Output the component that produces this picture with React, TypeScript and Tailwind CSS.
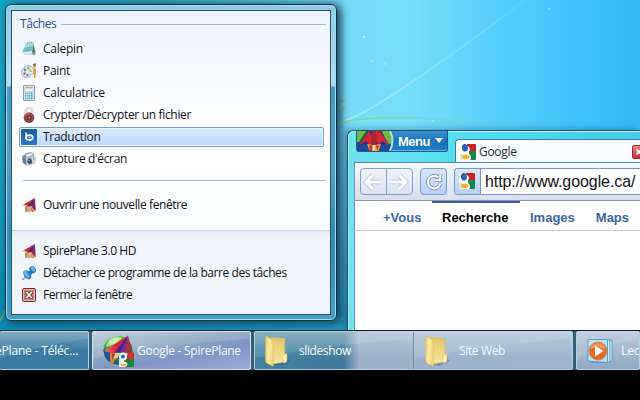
import React from "react";

const UI = "font-['Open_Sans','Noto_Sans',sans-serif]";

function Notepad() {
  return (
    <svg viewBox="0 0 16 16" className="h-4 w-4">
      <path d="M1 13.500l10 .5 4-1-3-1z" fill="#8a9b9c" opacity=".4" />
      <path d="M12 1.500l2.600 9.500-.8 3-3-1z" fill="#4c7f84" />
      <path d="M5.500 2l7-1-2 9.500-9.500 1z" fill="#6fbdc0" />
      <path d="M5.500 2l7-1-.8 4-8.200 2z" fill="#a8dfdd" />
      <path d="M1 11.500l9.500-1 1.500 2-8.500.8z" fill="#d5ece9" />
      <path d="M6.500 1v2M8.500 .8v2M10.500 .6v2" stroke="#8aa9ab" strokeWidth=".7" />
      <path d="M12 11.500l2.500.5-.7 2.500z" fill="#c88a70" />
    </svg>
  );
}

function Palette() {
  return (
    <svg viewBox="0 0 16 16" className="h-4 w-4">
      <path d="M7 2.800C2.500 3 .3 7 .7 10.500c.4 3.200 3.800 4.500 7.300 3.600 2.300-.7.8-2.800 2.800-3.300 3-.7 3.200-3.300 1.400-5.600C11 3.500 9 2.700 7 2.800z" fill="#e4eef6" stroke="#8aa6c4" strokeWidth=".9" />
      <circle cx="4" cy="7" r="1.400" fill="#4a8cd5" />
      <circle cx="7.300" cy="5.300" r="1.300" fill="#6cc04e" />
      <circle cx="9.500" cy="7.800" r="1.400" fill="#e0b036" />
      <circle cx="3.500" cy="10.600" r="1.300" fill="#d55a4a" />
      <circle cx="6.500" cy="12" r="1.200" fill="#4b91d6" />
      <path d="M12.400 5.500h2.400l.2 4.500-.8 5h-1l-1-5z" fill="#e8973f" />
      <path d="M12.500 3.500h2.200v2h-2.200z" fill="#c9c2b2" />
      <path d="M11.800 1.200l1.500-.7L15 0l-.2 3.500h-2.600z" fill="#a9744a" />
    </svg>
  );
}

function Calculator() {
  return (
    <svg viewBox="0 0 16 16" className="h-4 w-4">
      <rect x="2.500" y=".5" width="11" height="15" rx=".5" fill="#dceaf3" stroke="#7fa4bc" />
      <path d="M4 2h8v1H4z" fill="#eba55c" />
      <rect x="4" y="3.500" width="8" height="2.500" fill="#fbfdff" stroke="#a9c4d5" strokeWidth=".5" />
      {[7.5, 10, 12.5].map((y) =>
        [4, 6, 8, 10].map((x) => <rect key={x + "-" + y} x={x} y={y} width="1.500" height="1.600" fill={x > 8 ? "#3f93bb" : "#68b2d0"} />),
      )}
    </svg>
  );
}

function Padlock() {
  return (
    <svg viewBox="0 0 16 16" className="h-4 w-4">
      <path d="M4.700 8V4a3.300 3.300 0 0 1 6.600 0v4" fill="none" stroke="#c4b9b8" strokeWidth="2.200" />
      <path d="M4.700 7V4a3.300 3.300 0 0 1 6.600 0v3" fill="none" stroke="#f4eeec" strokeWidth="1.100" />
      <circle cx="8" cy="10.700" r="4.900" fill="#b03a3b" stroke="#7d2a2d" strokeWidth=".8" />
      <circle cx="8.300" cy="10.700" r="3" fill="#5f3840" stroke="#8c4c4e" strokeWidth=".7" />
      <circle cx="8.300" cy="10.700" r="1" fill="#b39b9c" />
      <path d="M4.500 8.500q1.500-2 4-1.700" stroke="#e09a92" strokeWidth=".8" fill="none" />
    </svg>
  );
}

function Translator() {
  return (
    <svg viewBox="0 0 16 16" className="h-4 w-4">
      <defs>
        <linearGradient id="translate" x2="0" y2="1"><stop stopColor="#1c5c9e" /><stop offset="1" stopColor="#3478bd" /></linearGradient>
      </defs>
      <rect width="16" height="16" rx="1" fill="url(#translate)" />
      <path d="M4 3.900l1.200.5v4" stroke="white" strokeWidth="1.300" fill="none" />
      <ellipse cx="8.300" cy="8.600" rx="3.500" ry="2.500" fill="none" stroke="white" strokeWidth="1.600" />
      <ellipse cx="8.300" cy="8.300" rx="1" ry=".6" fill="white" />
    </svg>
  );
}

function Camera() {
  return (
    <svg viewBox="0 0 16 16" className="h-4 w-4">
      <path d="M4 2.500l6-1.500 3.500 2.500-1 3-9 2z" fill="#929aa1" />
      <path d="M4.500 4l6-2 1.500 2-6 2z" fill="#eef5f8" />
      <path d="M1 6.500l11-2 3 2-1 6-8 2.500-4-3z" fill="#adb8c1" />
      <path d="M1 6.500l4 1.500v6l-3-2.500z" fill="#697782" />
      <path d="M5 8l9-2-.5 6-7.500 2.200z" fill="#d2dde4" />
      <ellipse cx="8.700" cy="10.300" rx="2.500" ry="3" fill="#536b7d" />
      <ellipse cx="8.700" cy="10.300" rx="1.500" ry="2" fill="#1e3f5c" />
      <path d="M1.500 4.500l3.500-1v4H1.500z" fill="#7399b9" />
      <circle cx="8.300" cy="9.500" r=".7" fill="#b4d8ef" />
      <path d="M12 7l1.500-.3v2L12 9z" fill="#8ea4b4" />
    </svg>
  );
}

function Plane() {
  return (
    <svg viewBox="0 0 16 16" className="h-4 w-4">
      <path d="M4 9l9 0 .5 6-3-2-1.500 2.300-5-.8z" fill="#d9a48a" />
      <path d="M.5 8.500L7 4.800 6 9.500z" fill="#ecc08e" />
      <path d="M3 7.200L14 .8 8 9.500z" fill="#cf2a2c" />
      <path d="M7 8.500l7-7.700-2.500 9z" fill="#3d2a9c" />
      <path d="M11 9L14 .8l.7 13.700-3.200-3.500z" fill="#92245c" />
      <path d="M6 9.500l5-.5-1 4.500-3.500-1z" fill="#e3ab92" />
      <path d="M4.500 10l2 .5-.5 4-1.700.2z" fill="#a8875a" />
      <path d="M10.500 10.500l3 4.500h-2.500l-1.500-2z" fill="#dc8636" />
      <path d="M6 9.200l5.500-.7" stroke="#7b2430" strokeWidth=".8" />
    </svg>
  );
}

function Pin() {
  return (
    <svg viewBox="0 0 16 16" className="h-4 w-4">
      <path d="M5 11l-3.500 4" stroke="#8a99a5" strokeWidth="1.200" />
      <ellipse cx="6.300" cy="9.700" rx="3.300" ry="5" transform="rotate(-38 6.300 9.700)" fill="#2a74bb" />
      <ellipse cx="5.500" cy="9.300" rx="2" ry="4.200" transform="rotate(-38 5.500 9.300)" fill="#62b5e8" />
      <path d="M6 8l4-4 3 3-4 4z" fill="#347fb9" />
      <ellipse cx="11.700" cy="4.600" rx="2.900" ry="3.700" transform="rotate(-38 11.700 4.600)" fill="#2b6fb8" />
      <ellipse cx="12.100" cy="4.200" rx="1.900" ry="2.700" transform="rotate(-38 12.100 4.200)" fill="#69b1ee" />
    </svg>
  );
}

function Cross() {
  return (
    <svg viewBox="0 0 16 16" className="h-4 w-4">
      <rect x="1.500" y="1.500" width="13" height="13" rx="1.500" fill="#cb8177" stroke="#742c2c" />
      <rect x="2.500" y="2.500" width="11" height="11" rx=".5" fill="none" stroke="#ecb5ae" />
      <path d="M5.500 5.200l5 5.600m0-5.600l-5 5.600" stroke="#59292a" strokeWidth="3.300" />
      <path d="M4 5.200h3m2 0h3M4 10.800h3m2 0h3" stroke="#59292a" strokeWidth="2.200" />
      <path d="M5.500 5.200l5 5.600m0-5.600l-5 5.600" stroke="white" strokeWidth="1.700" />
      <path d="M4.500 5.200h2.200m2.600 0h2.200M4.500 10.800h2.200m2.600 0h2.200" stroke="white" />
    </svg>
  );
}

function GoogleIcon() {
  return (
    <svg viewBox="0 0 16 16" className="h-4 w-4 shrink-0">
      <path d="M0 0h16v16H0z" fill="#fff" />
      <path d="M7 0h8q1 0 1 1v6h-6.500C10.500 4 9.500 2.500 7 2z" fill="#cf1f2a" />
      <path d="M9 7h7v8q0 1-1 1h-5c2-2 1.500-4-1-6z" fill="#16864b" />
      <path d="M0 10h3l-1.500 2L2 16H1q-1 0-1-1z" fill="#cfe0ea" />
      <ellipse cx="4.900" cy="3.800" rx="2.900" ry="3.800" transform="rotate(-12 4.900 3.800)" fill="#2962b2" />
      <ellipse cx="5.500" cy="13" rx="3.800" ry="2.500" fill="#f0b335" />
    </svg>
  );
}

function Orb() {
  return (
    <svg viewBox="0 0 32 32" className="h-8 w-8 shrink-0">
      <defs>
        <radialGradient id="globe" cx=".4" cy=".15" r=".9"><stop stopColor="#c9f0ae" /><stop offset=".3" stopColor="#58b83e" /><stop offset=".65" stopColor="#20753f" /><stop offset="1" stopColor="#20539b" /></radialGradient>
        <linearGradient id="wing" x2="1"><stop stopColor="#f0776a" /><stop offset=".5" stopColor="#e02036" /><stop offset="1" stopColor="#d81d33" /></linearGradient>
      </defs>
      <circle cx="16" cy="15.500" r="15" fill="url(#globe)" stroke="#adcdd2" strokeWidth=".8" />
      <path d="M1.500 14q5 1 7 5l0 9q-7-5-7-14z" fill="#234f9e" />
      <path d="M7 6q5-5 13-3l-8 6-8 3q1-4 3-6z" fill="#e2f8d6" opacity=".65" />
      <path d="M2 16L26 .500 14 18l-5 0z" fill="url(#wing)" />
      <path d="M13 17.500L26 .500l-5 17z" fill="#3426a0" />
      <path d="M18 17L26 .500l-2 17z" fill="#7a2798" />
      <path d="M23 17L26 .500l4.500 17-3.500-2z" fill="#b0303b" />
      <path d="M8 18l7 0-2 7-3 5-2-2z" fill="#d9813a" />
      <path d="M13 18l5 0-3 6-3-1z" fill="#efc09d" />
      <path d="M10 18.500l3 .5-3 6z" fill="#8b4633" />
      <path d="M24 17.500h8v7h-8z" fill="#d42f27" />
      <path d="M23 24h9v8h-9z" fill="#17863f" />
      <path d="M17 24h5v8h-5z" fill="#dfeff3" />
      <circle cx="21" cy="21.500" r="3" fill="#2465b7" stroke="white" strokeWidth="2" />
      <path d="M23 19.200h2.500M20.500 25q-1.500 1.500 1.500 2.200t2.500 2" fill="none" stroke="white" strokeWidth="1.600" />
      <ellipse cx="21.500" cy="29.800" rx="3.400" ry="1.700" fill="#efa82c" stroke="white" strokeWidth="1" />
    </svg>
  );
}

function Folder() {
  return (
    <svg viewBox="0 0 28 32" className="h-8 w-7 shrink-0">
      <defs>
        <linearGradient id="folderFront" x2="1" y2=".2"><stop stopColor="#e3c868" /><stop offset=".5" stopColor="#fbeaa0" /><stop offset="1" stopColor="#efd77f" /></linearGradient>
        <linearGradient id="folderBack" x2="0" y2="1"><stop stopColor="#e2c566" /><stop offset="1" stopColor="#f8e7a0" /></linearGradient>
      </defs>
      <path d="M9 30l14-8 4 4-11 5z" fill="#26516d" opacity=".3" />
      <path d="M8 2.500l13 .8q.8 0 .8 1V27l-12 2z" fill="url(#folderBack)" stroke="#d2b458" strokeWidth=".5" />
      <path d="M20 19.500l4-1v7.500q0 1.500-4 2z" fill="#fbeaaa" stroke="#d2b458" strokeWidth=".5" />
      <path d="M2.500 2q0-1 1.500-.6l5.500 3.600q.8.600.8 1.500v24q0 .8-.8.500L3.500 28q-1-.7-1-1.700z" fill="url(#folderFront)" stroke="#d2b458" strokeWidth=".5" />
      <path d="M21.800 21.500v5" stroke="white" strokeWidth=".9" />
    </svg>
  );
}

function MediaPlayer() {
  return (
    <svg viewBox="0 0 28 28" className="h-7 w-7 shrink-0">
      <path d="M5 3h21v21l-2 1H5z" fill="#82bfe0" stroke="#3d85b6" strokeWidth=".8" />
      <path d="M2 2.500h19.500v23L2 24z" fill="#bfe2f4" stroke="#4b91bc" strokeWidth=".8" />
      <path d="M22.500 3.500v21.500M25 3.500V24" stroke="#e5f6ff" strokeWidth=".8" />
      <circle cx="12" cy="14" r="9" fill="#e66d24" stroke="#b98a6d" />
      <path d="M4 12q2-6 8-6t8 6q-8-3-16 0z" fill="#fab075" opacity=".6" />
      <path d="M9 8.500v11l8.500-5.500z" fill="white" />
    </svg>
  );
}

type MenuItem = { label: string; icon: React.ReactNode; spacing: string; active?: boolean };

function MenuRow({ label, icon, spacing, active }: MenuItem) {
  return (
    <div className={"flex items-center rounded-[2px] border px-[1px] text-[12px] text-[#111114] whitespace-nowrap " + UI + (active ? " h-[20px] my-[1px] border-[#7c9fc5] bg-linear-to-b from-[#deedff] to-[#b9d8fc] shadow-[inset_0_0_0_1px_#e8f4ff]" : " h-[22px] border-transparent")}>
      {icon}<span className={"ml-[6px] leading-none " + spacing}>{label}</span>
    </div>
  );
}

const tasks: MenuItem[] = [
  { label: "Calepin", icon: <Notepad />, spacing: "tracking-[-0.25px]" },
  { label: "Paint", icon: <Palette />, spacing: "tracking-[-0.3px]" },
  { label: "Calculatrice", icon: <Calculator />, spacing: "tracking-[-0.25px]" },
  { label: "Crypter/Décrypter un fichier", icon: <Padlock />, spacing: "tracking-[-0.33px]" },
  { label: "Traduction", icon: <Translator />, spacing: "tracking-[-0.3px]", active: true },
  { label: "Capture d'écran", icon: <Camera />, spacing: "tracking-[-0.36px]" },
];

function JumpList() {
  return (
    <section className="absolute left-[5px] top-[4px] h-[317px] w-[332px] rounded-[6px] border border-[#0e3545] bg-[linear-gradient(to_bottom,#8dcbe3_0px,#b6dcef_81px,#4999c0_82px,#589ec6_160px,#368bb2_230px,#45a0c7_317px)] p-[5px] shadow-[3px_1px_8px_1px_#123f55,inset_0_0_0_1px_#9eddf2]">
      <div className="flex h-full flex-col border border-[#235575] bg-linear-to-b from-[#edf3fc] via-white via-40% to-[#f8faff]">
        <div className={"flex h-[26px] shrink-0 items-center gap-[5px] pl-[8px] pr-[4px] text-[12px] text-[#2b4e93] " + UI}>
          <span className="tracking-[-0.4px]">Tâches</span><span className="h-px flex-1 bg-[#a5b8d3]" />
        </div>
        <div className="ml-[7px] mr-[6px] pt-[1px]">{tasks.map((item) => <MenuRow key={item.label} {...item} />)}</div>
        <div className="mx-[4px] ml-[11px] mt-[10px] h-px shrink-0 bg-[#adbdd3]" />
        <div className="ml-[7px] mt-[13px]"><MenuRow label="Ouvrir une nouvelle fenêtre" icon={<Plane />} spacing="tracking-[-0.39px]" /></div>
        <div className="mt-auto h-[84px] shrink-0 border-t border-[#c9d2e2] bg-linear-to-b from-[#e5ebf6] via-[#f0f4fb] via-10% to-[#f0f5fc] pl-[7px] pt-[9px]">
          <MenuRow label="SpirePlane 3.0 HD" icon={<Plane />} spacing="tracking-[-0.43px]" />
          <MenuRow label="Détacher ce programme de la barre des tâches" icon={<Pin />} spacing="tracking-[-0.43px]" />
          <MenuRow label="Fermer la fenêtre" icon={<Cross />} spacing="tracking-[-0.47px]" />
        </div>
      </div>
    </section>
  );
}

function NavArrow({ right = false }) {
  return (
    <svg viewBox="0 0 20 20" className={"h-5 w-5 " + (right ? "rotate-180" : "")}>
      <path d="M10 3L3 10l7 7M4 10h14" fill="none" stroke="#b4bccb" strokeWidth="4.400" />
      <path d="M10 3L3 10l7 7M4 10h14" fill="none" stroke="#fbfcff" strokeWidth="3" />
    </svg>
  );
}

function BrowserWindow() {
  return (
    <section className="absolute left-[347px] top-[130px] h-[201px] w-[293px] overflow-hidden rounded-tl-[6px] border-l border-t border-[#284f63] bg-[linear-gradient(to_right,#70e3ee,#4ddbef_50%,#48caed)] pl-[6px] shadow-[-3px_-1px_7px_#194b6266,inset_1px_1px_0_#b6f5fb]">
      <div className="flex h-[31px] items-start">
        <div className="ml-[2px] flex h-[21px] w-[92px] items-center overflow-hidden rounded-b-[3px] border border-t-0 border-[#205a88] bg-linear-to-b from-[#398fce] via-[#1672bf] to-[#237fc7] shadow-[inset_0_-1px_0_#5eb4df]">
          <svg viewBox="0 0 37 21" className="h-[21px] w-[37px] shrink-0">
            <path d="M0 0h34q5 10 0 21H0z" fill="#1b6b3a" />
            <path d="M0 12q8-5 18-4t16 6v7H0z" fill="#1f4698" />
            <path d="M0 0h9L2 11H0zM25 0h8q3 6 2 12l-5 2z" fill="#6cbb3e" />
            <path d="M1 15L11 0h13l9 15-5-3-5 4-5-3-5 3-5-4z" fill="#35279b" />
            <path d="M2 14L12 0l5 10-4 4-4-4zM18 0h5l9 14-7-4-3 4-4-5z" fill="#d6282e" />
            <path d="M15 0h4l1 11-3 4-3-4z" fill="#a8262f" />
            <path d="M10 13l7 1 7-1-3 8h-8z" fill="#f1a544" />
            <path d="M12 15l3-1 0 6h-2zM19 14l3 1-2 5z" fill="#c13b2b" />
            <path d="M16 14h2v5h-2z" fill="#f6d9b0" />
            <path d="M33 0q5 9 0 20" fill="none" stroke="#a8ddeb" strokeWidth="2" />
          </svg>
          <b className="ml-[4px] font-['Liberation_Sans',sans-serif] text-[13px] leading-none tracking-[-0.5px] text-white">Menu</b>
          <svg viewBox="0 0 8 5" className="ml-[5px] mb-[2px] h-[5px] w-[8px] shrink-0"><path d="M0 0h8L4 5z" fill="white" /></svg>
        </div>
        <div className="ml-[7px] mt-[8px] flex h-[23px] flex-1 items-center rounded-tl-[4px] border-l border-t border-[#477b9d] bg-[#f8fbff] pl-[4px] pt-[2px]">
          <GoogleIcon /><span className={"ml-[3px] text-[12px] leading-none tracking-[-0.3px] text-[#222b36] " + UI}>Google</span>
          <div className="-mr-[6px] ml-auto flex h-[14px] w-[14px] items-center justify-center rounded-[2px] border border-[#972d32] bg-linear-to-b from-[#e48986] to-[#c13237]">
            <svg viewBox="0 0 10 10" className="h-[8px] w-[8px]"><path d="M2 2l6 6m0-6L2 8" stroke="white" strokeWidth="2" /></svg>
          </div>
        </div>
      </div>
      <div className="flex h-[39px] border-b border-l border-t border-b-[#8797ac] border-l-[#6796b5] border-t-[#4f8da9] bg-linear-to-b from-[#f3f9fd] to-[#d8dfeb] pl-[5px] pt-[5px]">
        <div className="flex h-[27px] w-[53px] rounded-[4px] border border-[#8a9ebb] bg-linear-to-b from-[#edf2fa] to-[#dce5f4]">
          <div className="flex w-[26px] items-center justify-center border-r border-[#8a9ebb]"><NavArrow /></div>
          <div className="flex w-[26px] items-center justify-center"><NavArrow right /></div>
        </div>
        <div className="ml-[7px] flex h-[27px] w-[27px] items-center justify-center rounded-[4px] border border-[#7c9acc] bg-linear-to-b from-[#d9e7fb] to-[#b6cffa]">
          <svg viewBox="0 0 20 20" className="h-[18px] w-[18px]">
            <path d="M15 5A7 7 0 1 0 17 12M17 2v6h-6" fill="none" stroke="#7186a7" strokeWidth="4" />
            <path d="M15 5A7 7 0 1 0 17 12M17 2v6h-6" fill="none" stroke="#f6f9ff" strokeWidth="2.400" />
          </svg>
        </div>
        <div className="ml-[7px] flex h-[27px] flex-1 overflow-hidden rounded-l-[4px] border border-r-0 border-[#7895bb] bg-white">
          <div className="flex w-[26px] shrink-0 items-center border-r border-[#7895bb] bg-linear-to-b from-[#d7e5f8] to-[#b9d0f2] pb-[1px] pl-[4px]"><GoogleIcon /></div>
          <span className="ml-[4px] self-center font-['Liberation_Sans',sans-serif] text-[16px] leading-none tracking-[-0.08px] text-[#101013]">http://www.google.ca/</span>
        </div>
      </div>
      <nav className="flex h-[30px] whitespace-nowrap border-b border-l border-b-[#cfcfcf] border-l-[#638ca4] bg-white font-['Liberation_Sans',sans-serif] text-[13px] font-bold leading-[33px] text-[#3c65a8]">
        <span className="ml-[28px] w-[49px]">+Vous</span>
        <span className="relative w-[88px] pl-[10px] text-black before:absolute before:top-0 before:left-0 before:h-[2px] before:w-[88px] before:bg-[#3e5ca3]">Recherche</span>
        <span className="pl-[10px]">Images</span><span className="ml-[21px]">Maps</span>
      </nav>
      <div className="h-[100px] border-l border-[#638ca4] bg-white" />
    </section>
  );
}

const glass = "relative h-[39px] shrink-0 overflow-hidden rounded-[2px] border border-[#afd4e8] text-[12px] text-[#f4fbff] " + UI;

function Gloss() {
  return <svg viewBox="0 0 160 38" preserveAspectRatio="none" className="absolute inset-0 h-full w-full"><path d="M0 0h160v7Q85 12 0 27z" fill="white" opacity=".1" /></svg>;
}

function Taskbar() {
  return (
    <footer className="absolute inset-x-0 top-[330px] flex h-[40px] overflow-hidden border-t border-[#10232f] bg-[#315f78]">
      <div className={glass + " flex w-[89px] items-center border-l-0 bg-linear-to-b from-[#6fa0ba] via-[#3b7ba0] via-50% to-[#367ea3]"}>
        <Gloss /><span className="relative -ml-[5px] whitespace-nowrap leading-none tracking-[-0.18px]">ePlane - Téléc...</span>
      </div>
      <div className={glass + " ml-[3px] flex w-[159px] items-center border-[#d4e2f2] bg-[linear-gradient(170deg,#bdccda_0%,#8da9c4_40%,#7f94c4_62%,#a5aad9_100%)] pl-[9px]"}>
        <Gloss /><div className="relative flex items-center gap-[3px]"><Orb /><span className="whitespace-nowrap leading-none tracking-[-0.28px]">Google - SpirePlane</span></div>
      </div>
      <div className={glass + " ml-[3px] flex w-[319px] bg-[linear-gradient(to_right,#41819f_0%,#427b9d_28%,#9cb0cb_33%,#9eb4cf_100%)]"}>
        <div className="absolute inset-0 bg-linear-to-b from-white/30 to-transparent to-70%" />
        <div className="relative flex h-full w-[159px] items-center border-r border-[#7991a8] pl-[8px]">
          <Gloss /><div className="relative flex items-center gap-[8px]"><Folder /><span className="leading-none tracking-[-0.4px]">slideshow</span></div>
        </div>
        <div className="relative flex h-full flex-1 items-center pl-[9px]">
          <Gloss /><div className="relative flex items-center gap-[8px]"><Folder /><span className="leading-none tracking-[-0.35px]">Site Web</span></div>
        </div>
      </div>
      <div className={glass + " ml-[3px] flex w-[64px] items-center bg-linear-to-b from-[#bccbdc] to-[#8fa9c6] pl-[9px]"}>
        <Gloss /><div className="relative flex items-center gap-[7px]"><MediaPlayer /><span className="leading-none">Lect</span></div>
      </div>
    </footer>
  );
}

export default function App() {
  return (
    <main className="relative h-[400px] w-[640px] overflow-hidden bg-black">
      <div className="absolute inset-x-0 top-0 h-[331px] bg-[linear-gradient(to_right,#16a9c8_0px,#2fa5bf_150px,#78d9f6_335px,#78dff9_400px,#55cefb_500px,#32b8f6_640px)]">
        <svg viewBox="0 0 640 331" className="h-full w-full">
          <defs>
            <linearGradient id="deepen" x2="0" y2="1"><stop offset=".35" stopColor="#087dab" stopOpacity="0" /><stop offset="1" stopColor="#0a7fae" stopOpacity=".8" /></linearGradient>
            <linearGradient id="beam"><stop stopColor="#d6ffff" stopOpacity=".5" /><stop offset="1" stopColor="#b3edff" stopOpacity=".1" /></linearGradient>
            <linearGradient id="ribbon"><stop stopColor="#8cd88a" /><stop offset="1" stopColor="#56d5df" stopOpacity=".2" /></linearGradient>
          </defs>
          <path d="M0 0h353v331H0z" fill="url(#deepen)" />
          <path d="M335 125Q352 119 375 106Q440 65 525 0" fill="none" stroke="url(#beam)" strokeWidth="2" />
          <path d="M337 123Q365 117 410 118T540 127" fill="none" stroke="url(#ribbon)" strokeWidth="1.500" />
          <path d="M337 103l8-3M337 115q5-5 8-8M0 321l5-10" stroke="#9bbd43" strokeWidth="1.500" opacity=".7" fill="none" />
          <g fill="#d9faff"><circle cx="364" cy="37" r="1" /><circle cx="372" cy="61" r=".7" /><circle cx="385" cy="64" r=".7" /><circle cx="433" cy="121" r=".8" /><circle cx="549" cy="9" r=".7" /></g>
        </svg>
      </div>
      <BrowserWindow />
      <JumpList />
      <Taskbar />
    </main>
  );
}
